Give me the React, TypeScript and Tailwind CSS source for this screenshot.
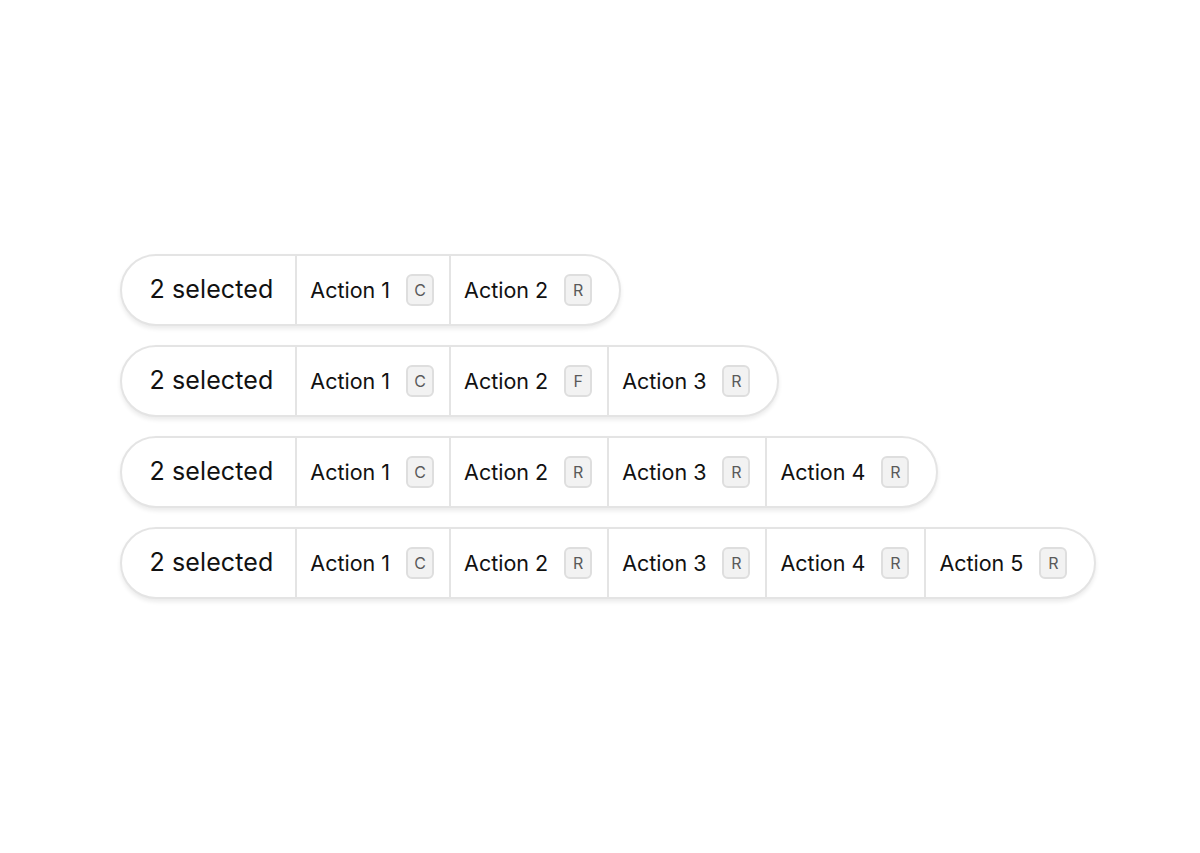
import React from "react";

type Action = { label: string; key: string };

const rows: Action[][] = [
  [
    { label: "Action 1", key: "C" },
    { label: "Action 2", key: "R" },
  ],
  [
    { label: "Action 1", key: "C" },
    { label: "Action 2", key: "F" },
    { label: "Action 3", key: "R" },
  ],
  [
    { label: "Action 1", key: "C" },
    { label: "Action 2", key: "R" },
    { label: "Action 3", key: "R" },
    { label: "Action 4", key: "R" },
  ],
  [
    { label: "Action 1", key: "C" },
    { label: "Action 2", key: "R" },
    { label: "Action 3", key: "R" },
    { label: "Action 4", key: "R" },
    { label: "Action 5", key: "R" },
  ],
];

function Kbd({ children }: { children: React.ReactNode }) {
  return (
    <span className="flex h-[32px] w-[28px] items-center justify-center rounded-[6px] border-2 border-[#dedede] bg-[#f2f2f2] text-[16px] leading-none text-[#5a5a5a]">
      {children}
    </span>
  );
}

function SelectionBar({ actions }: { actions: Action[] }) {
  return (
    <div className="flex h-[72px] items-stretch rounded-full border-2 border-[#e4e4e4] bg-white shadow-[0_3px_4px_rgba(0,0,0,0.08)]">
      <div className="flex items-center pl-[28px] pr-[22px] text-[25px] tracking-[0.1px] text-[#111]">
        2 selected
      </div>
      {actions.map((a, i) => (
        <div
          key={i}
          className={`flex items-center gap-[16px] border-l-2 border-[#e4e4e4] pl-[13px] ${
            i === actions.length - 1 ? "pr-[27px]" : "pr-[15px]"
          }`}
        >
          <span className="text-[21.5px] text-[#111]">{a.label}</span>
          <Kbd>{a.key}</Kbd>
        </div>
      ))}
    </div>
  );
}

export default function App() {
  return (
    <div
      className="flex min-h-[853px] w-full items-center justify-center bg-white"
      style={{ fontFamily: "Inter, 'Noto Sans', sans-serif" }}
    >
      <div className="ml-[16px] flex flex-col items-start gap-[19px]">
        {rows.map((r, i) => (
          <SelectionBar key={i} actions={r} />
        ))}
      </div>
    </div>
  );
}
